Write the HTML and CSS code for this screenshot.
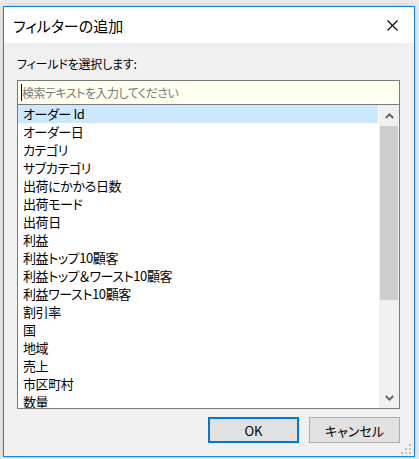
FILE: index.html
```html
<!DOCTYPE html>
<html lang="ja">
<head>
<meta charset="utf-8">
<title>フィルターの追加</title>
<link rel="stylesheet" href="styles.css">
</head>
<body>
<div class="desktop">
  <div class="window">
    <div class="titlebar">
      <span class="title">フィルターの追加</span>
      <svg class="close" width="11" height="11" viewBox="0 0 11 11"><path d="M0.5 0.5 L10.5 10.5 M10.5 0.5 L0.5 10.5" stroke="#000" stroke-width="1.1" fill="none"/></svg>
    </div>
    <div class="content">
      <div class="label">フィールドを選択します:</div>
      <div class="search"><span class="caret"></span><span class="placeholder">検索テキストを入力してください</span></div>
      <div class="listbox">
        <div class="items">
          <div class="item selected">オーダー Id</div>
          <div class="item">オーダー日</div>
          <div class="item">カテゴリ</div>
          <div class="item">サブカテゴリ</div>
          <div class="item">出荷にかかる日数</div>
          <div class="item">出荷モード</div>
          <div class="item">出荷日</div>
          <div class="item">利益</div>
          <div class="item">利益トップ10顧客</div>
          <div class="item">利益トップ＆ワースト10顧客</div>
          <div class="item">利益ワースト10顧客</div>
          <div class="item">割引率</div>
          <div class="item">国</div>
          <div class="item">地域</div>
          <div class="item">売上</div>
          <div class="item">市区町村</div>
          <div class="item">数量</div>
        </div>
        <div class="scrollbar">
          <div class="sb-btn"><svg width="9" height="6" viewBox="0 0 9 6"><polyline points="0.8,5 4.5,1.3 8.2,5" stroke="#606060" stroke-width="1.8" fill="none"/></svg></div>
          <div class="sb-track"><div class="sb-thumb"></div></div>
          <div class="sb-btn"><svg width="9" height="6" viewBox="0 0 9 6"><polyline points="0.8,1 4.5,4.7 8.2,1" stroke="#606060" stroke-width="1.8" fill="none"/></svg></div>
        </div>
      </div>
      <div class="buttons">
        <div class="btn default">OK</div>
        <div class="btn">キャンセル</div>
      </div>
    </div>
    <svg class="grip" width="10" height="10" viewBox="0 0 10 10">
      <rect x="8" y="0" width="2" height="2" fill="#bfbfbf"/>
      <rect x="4" y="4" width="2" height="2" fill="#bfbfbf"/>
      <rect x="8" y="4" width="2" height="2" fill="#bfbfbf"/>
      <rect x="0" y="8" width="2" height="2" fill="#bfbfbf"/>
      <rect x="4" y="8" width="2" height="2" fill="#bfbfbf"/>
      <rect x="8" y="8" width="2" height="2" fill="#bfbfbf"/>
    </svg>
  </div>
</div>
</body>
</html>
```

FILE: styles.css
```css
* { box-sizing: border-box; }
html, body {
  margin: 0;
  padding: 0;
}
body {
  width: 419px;
  height: 459px;
  overflow: hidden;
  background: #ececec;
  font-family: "Noto Sans CJK JP", "Noto Sans", sans-serif;
  font-feature-settings: "palt";
  color: #000;
}
.desktop {
  padding: 6px 0 0 3px;
}
.window {
  position: relative;
  width: 412px;
  height: 451px;
  border: 1px solid #1883d7;
  display: flex;
  flex-direction: column;
  box-shadow: 0 0 6px rgba(0,0,0,0.18);
}
.titlebar {
  height: 36px;
  background: #fff;
  display: flex;
  align-items: center;
  justify-content: space-between;
  padding: 2px 16px 0 9px;
}
.title {
  font-size: 15px;
  line-height: 20px;
}
.close {
  display: block;
  margin-top: -2px;
}
.content {
  flex: 1;
  background: #f0f0f0;
  padding: 13px 14px 0 13px;
  display: flex;
  flex-direction: column;
}
.label {
  font-size: 12px;
  line-height: 16px;
  height: 16px;
  margin-bottom: 8px;
  letter-spacing: -0.2px;
}
.search {
  height: 25px;
  border: 1px solid #7a7a7a;
  background: #ffffef;
  display: flex;
  align-items: center;
  padding-left: 3px;
}
.caret {
  width: 1px;
  height: 17px;
  background: #000;
}
.placeholder {
  font-size: 12px;
  line-height: 16px;
  color: #7a7a7a;
  letter-spacing: -0.5px;
}
.listbox {
  height: 304px;
  border: 1px solid #7a7a7a;
  border-top: none;
  background: #fff;
  display: flex;
}
.items {
  flex: 1;
  overflow: hidden;
  padding-right: 1px;
}
.item {
  height: 18px;
  line-height: 18px;
  font-size: 13px;
  padding-left: 5px;
  white-space: nowrap;
  letter-spacing: -0.4px;
}
.item.selected {
  background: #cce8ff;
}
.scrollbar {
  width: 20px;
  background: #f0f0f0;
  display: flex;
  flex-direction: column;
}
.sb-btn {
  height: 21px;
  display: flex;
  align-items: center;
  justify-content: center;
}
.sb-btn svg { display: block; }
.sb-track {
  flex: 1;
}
.sb-thumb {
  height: 174px;
  margin: 0 1px;
  background: #cdcdcd;
}
.buttons {
  margin-top: 8px;
  display: flex;
  justify-content: flex-end;
  gap: 10px;
}
.btn {
  width: 91px;
  height: 26px;
  background: #e1e1e1;
  border: 1px solid #adadad;
  display: flex;
  align-items: center;
  justify-content: center;
  font-size: 13px;
}
.btn.default {
  border: 2px solid #0078d7;
}
.grip {
  position: absolute;
  right: 3px;
  bottom: 2px;
  display: block;
}
```
